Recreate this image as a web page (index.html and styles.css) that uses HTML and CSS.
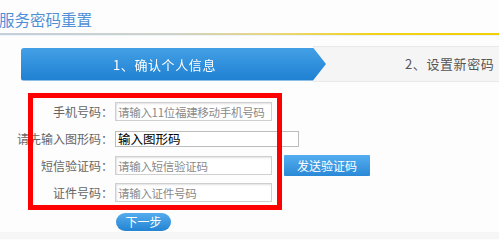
FILE: index.html
```html
<!DOCTYPE html>
<html lang="zh-CN">
<head>
<meta charset="utf-8">
<title>服务密码重置</title>
<link rel="stylesheet" href="styles.css">
</head>
<body>
<div class="page">
  <div class="header"><h1 class="title">服务密码重置</h1></div>
  <div class="divider"></div>
  <div class="steps">
    <div class="step step-active">1、确认个人信息</div>
    <div class="step step-next">2、设置新密码</div>
  </div>
  <div class="form-wrap">
    <form class="form">
      <div class="row">
        <label class="label">手机号码：</label>
        <input class="field" type="text" placeholder="请输入11位福建移动手机号码">
      </div>
      <div class="row">
        <label class="label">请先输入图形码：</label>
        <input class="field field-plain" type="text" value="输入图形码">
      </div>
      <div class="row">
        <label class="label">短信验证码：</label>
        <input class="field" type="text" placeholder="请输入短信验证码">
        <button class="send-btn" type="button">发送验证码</button>
      </div>
      <div class="row">
        <label class="label">证件号码：</label>
        <input class="field" type="text" placeholder="请输入证件号码">
      </div>
      <div class="actions">
        <button class="next-btn" type="button">下一步</button>
      </div>
    </form>
    <div class="highlight"></div>
  </div>
  <div class="footer"></div>
</div>
</body>
</html>
```

FILE: styles.css
```css
html, body {
  margin: 0;
  padding: 0;
}
body {
  width: 499px;
  height: 239px;
  overflow: hidden;
  background: #fdfdfd;
  font-family: "Noto Sans CJK SC", "Noto Sans", sans-serif;
  font-size: 12px;
  color: #666;
}
.page {
  display: flex;
  flex-direction: column;
  height: 239px;
}
.header {
  height: 33px;
  box-sizing: border-box;
  padding-top: 10px;
}
.title {
  margin: 0 0 0 -1px;
  font-size: 15.5px;
  line-height: 18px;
  font-weight: normal;
  color: #4f8fd8;
}
.divider {
  height: 2px;
  background: linear-gradient(to right, #c3cfdc 0%, #cfd2c8 35%, #e9d67a 55%, #f2d21a 75%, #f3d000 100%);
  box-shadow: 0 1px 0 #eef3f8;
}
.steps {
  margin-top: 11px;
  height: 36px;
  display: flex;
  align-items: center;
}
.step {
  height: 33px;
  line-height: 33px;
  font-size: 13px;
  letter-spacing: 0.6px;
  box-sizing: border-box;
}
.step-active {
  position: relative;
  z-index: 2;
  margin-left: 21px;
  width: 305px;
  padding-left: 92px;
  color: #fff;
  border-radius: 3px 0 0 3px;
  background: linear-gradient(to bottom, #43a0e6, #1f80d2);
  clip-path: polygon(0 0, 292px 0, 100% 50%, 292px 100%, 0 100%);
  filter: drop-shadow(1px 0 0 #fff);
}
.step-next {
  flex: 1;
  height: 36px;
  line-height: 34px;
  margin-left: -13px;
  padding-left: 92px;
  color: #555;
  background: #f5f5f5;
  border-top: 1px solid #e9e9e9;
  border-bottom: 1px solid #e9e9e9;
}
.form-wrap {
  position: relative;
  margin-top: 16px;
}
.form {
  display: flex;
  flex-direction: column;
  margin: 0;
}
.row {
  height: 27px;
  display: flex;
  align-items: center;
}
.label {
  width: 113px;
  flex: none;
  text-align: right;
  font-size: 12px;
  color: #666;
  white-space: nowrap;
  margin-right: 2px;
}
.field {
  width: 157px;
  height: 19px;
  box-sizing: border-box;
  margin: 0;
  padding: 0 0 0 2px;
  border: 1px solid #cfcfcf;
  box-shadow: inset 1px 1px 2px #e2e2e2;
  background: #fff;
  font-family: inherit;
  font-size: 11.5px;
  color: #333;
  outline: none;
}
.field::placeholder {
  color: #8a8a8a;
  letter-spacing: -0.3px;
}
.field-plain {
  width: 184px;
  height: 16px;
  border: 1px solid #bdbdbd;
  box-shadow: none;
  color: #000;
  font-size: 12.5px;
}
.send-btn {
  margin-left: 12px;
  width: 86px;
  height: 21px;
  border: none;
  border-radius: 1px;
  padding: 0;
  background: linear-gradient(to bottom, #55adf0, #2a89d7);
  color: #fff;
  font-family: inherit;
  font-size: 12px;
}
.actions {
  margin-top: 7px;
  padding-left: 116px;
}
.next-btn {
  width: 55px;
  height: 18px;
  padding: 0;
  border: none;
  border-radius: 9px;
  background: linear-gradient(to bottom, #55aced, #2384d3);
  color: #fff;
  font-family: inherit;
  font-size: 12px;
  line-height: 18px;
}
.highlight {
  position: absolute;
  top: -5px;
  left: 28px;
  width: 254px;
  height: 117px;
  box-sizing: border-box;
  border: 5px solid #f00;
  pointer-events: none;
}
.footer {
  margin-top: auto;
  height: 7px;
  background: #f6f6f6;
}
```
